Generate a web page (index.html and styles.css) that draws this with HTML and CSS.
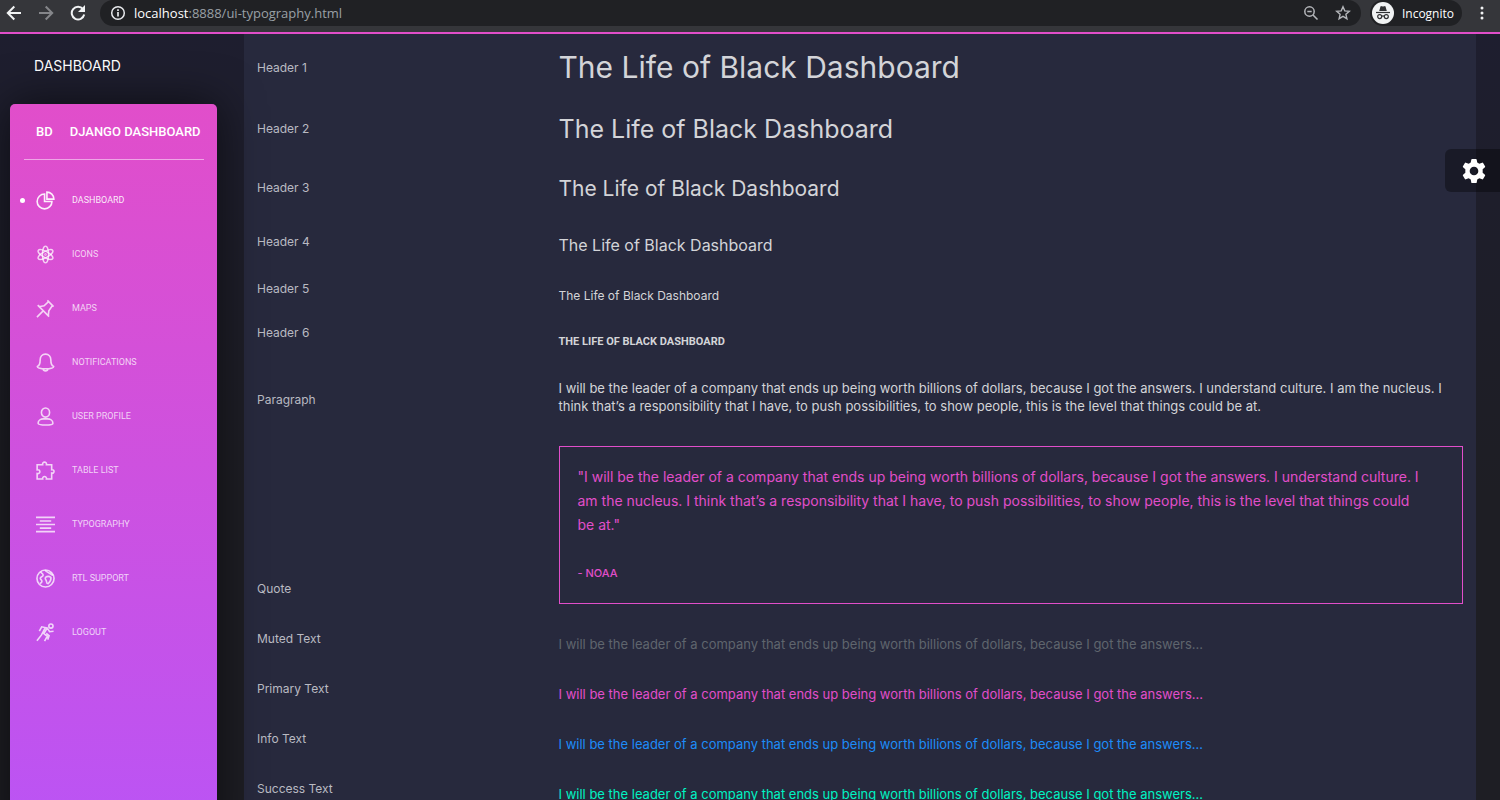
FILE: index.html
```html
<!DOCTYPE html>
<html lang="en">
<head>
<meta charset="utf-8">
<title>Black Dashboard - Typography</title>
<link rel="stylesheet" href="styles.css">
</head>
<body>
<header class="browser">
  <button class="tool" aria-label="Back"><svg width="16" height="16" viewBox="0 0 16 16" fill="none" stroke="#f1f3f4" stroke-width="2"><path d="M15 8H2M8.3 1.5 1.8 8l6.500 6.500"/></svg></button>
  <button class="tool" aria-label="Forward"><svg width="16" height="16" viewBox="0 0 16 16" fill="none" stroke="#85868a" stroke-width="2"><path d="M1 8h13M7.700 1.500 14.200 8l-6.500 6.500"/></svg></button>
  <button class="tool" aria-label="Reload"><svg width="16" height="16" viewBox="0 0 16 16"><path d="M13 4.200A6.300 6.300 0 1 0 14.200 9.500" fill="none" stroke="#f1f3f4" stroke-width="2"/><path d="M15 0v7H8z" fill="#f1f3f4"/></svg></button>
  <div class="omnibox">
    <svg width="16" height="16" viewBox="0 0 16 16" fill="none" stroke="#e8eaed"><circle cx="8" cy="8" r="6.300" stroke-width="1.500"/><path d="M8 7v4.500M8 4.200v1.800" stroke-width="1.700"/></svg>
    <a class="url" href="#"><span class="host">localhost</span>:8888/ui-typography.html</a>
    <button class="tool" aria-label="Zoom"><svg width="16" height="16" viewBox="0 0 16 16" fill="none" stroke="#b4b6ba" stroke-width="1.500"><circle cx="6.500" cy="6.500" r="4.700"/><path d="M4.300 6.500h4.400M10 10l4.500 4.500"/></svg></button>
    <button class="tool" aria-label="Bookmark"><svg width="16" height="16" viewBox="0 0 16 16" fill="none" stroke="#b4b6ba" stroke-width="1.400"><path d="m8 1.800 1.800 4.100 4.500.4-3.400 3 1 4.400L8 11.400l-3.900 2.300 1-4.400-3.400-3 4.500-.4z"/></svg></button>
  </div>
  <button class="profile">
    <svg width="22" height="22" viewBox="0 0 22 22"><circle cx="11" cy="11" r="11" fill="#f1f3f4"/><path d="M7.200 9 8.400 4.700q.3-.8 1.100-.5l1.500.4 1.500-.4q.8-.3 1.100.5L14.800 9z" fill="#303134"/><path d="M4 10.500h14" stroke="#303134" stroke-width="1.200"/><g fill="none" stroke="#303134" stroke-width="1.200"><circle cx="7.700" cy="14.600" r="2"/><circle cx="14.300" cy="14.600" r="2"/><path d="M9.700 14.300q1.300-.7 2.600 0"/></g></svg>
    Incognito
  </button>
  <button class="tool" aria-label="Menu"><svg width="16" height="16" viewBox="0 0 16 16" fill="#f1f3f4"><circle cx="8" cy="3" r="1.500"/><circle cx="8" cy="8" r="1.500"/><circle cx="8" cy="13" r="1.500"/></svg></button>
</header>

<div class="page">
  <aside class="side">
    <a class="page-title" href="#">DASHBOARD</a>
    <nav class="sidebar">
      <div class="brand"><a href="#">BD</a><a href="#">DJANGO DASHBOARD</a></div>
      <ul class="menu">
        <li><a class="active" href="#"><svg viewBox="0 0 20 20"><path d="M9 3.200A7.800 7.800 0 1 0 16.800 11H9z"/><path d="M11.500 1.200v7.300h7.300a7.300 7.300 0 0 0-7.300-7.300z"/></svg>DASHBOARD</a></li>
        <li><a href="#"><svg viewBox="0 0 20 20"><g stroke-width="1.400"><ellipse cx="10" cy="10" rx="3.200" ry="8.800"/><ellipse cx="10" cy="10" rx="3.200" ry="8.800" transform="rotate(60 10 10)"/><ellipse cx="10" cy="10" rx="3.200" ry="8.800" transform="rotate(120 10 10)"/></g><circle cx="10" cy="10" r=".4"/></svg>ICONS</a></li>
        <li><a href="#"><svg viewBox="0 0 20 20"><path d="M12 1.500 18.500 8M13.200 2.700 8.500 7.200 3 8.200M17.300 6.800l-3.800 5.700-.5 4.500M1.800 6.500l12 12M7.800 12.300 1 19"/></svg>MAPS</a></li>
        <li><a href="#"><svg viewBox="0 0 20 20"><path d="M10 1.200c-3.500 0-5.600 2.500-5.600 5.800 0 5-.9 6.300-3 7.200 0 1.500 3.300 2.400 8.600 2.400s8.600-.9 8.600-2.400c-2.100-.9-3-2.200-3-7.200 0-3.300-2.100-5.800-5.600-5.800zM7.500 17c.3 2.500 4.700 2.500 5 0"/></svg>NOTIFICATIONS</a></li>
        <li><a href="#"><svg viewBox="0 0 20 20"><ellipse cx="10" cy="5.800" rx="4.300" ry="4.800"/><path d="M2.200 17c0-3.300 3.300-4.500 5.600-4.500h4.400c2.300 0 5.600 1.200 5.600 4.500 0 1.300-3.500 2-7.800 2s-7.800-.7-7.800-2z"/></svg>USER PROFILE</a></li>
        <li><a href="#"><svg viewBox="0 0 20 20"><path d="M1.200 4H7c-.8-3.800 4.800-3.800 4 0h5.500v5.300c3.300-.8 3.300 4.200 0 3.400V19H11c.8-3.500-4.800-3.500-4 0H1.200v-5.800c3.800.8 3.800-4.700 0-3.900z"/></svg>TABLE LIST</a></li>
        <li><a href="#"><svg viewBox="0 0 20 20"><path d="M0 2.500h20M4 6.300h12M0 10h20M4 13.800h12M0 17.500h20"/></svg>TYPOGRAPHY</a></li>
        <li><a href="#"><svg viewBox="0 0 20 20"><circle cx="10" cy="10" r="9"/><path d="M5 2.700c.3 2.200 2.800 1.800 2.500 4-.2 1.500-3 1.300-3 3 0 1.500 2 1.500 1.700 3.600-.2 1.200-1.200 1.500-2 2M10 1.200c-.3 2.500 4 1.500 4.500 4.300M10 8.800c2-1.500 4.300-1 5.700 0 .5 2.700-.6 4.500-2.900 6.700-2.500-.3-1.200-2-2-3.300-.6-1-1.600-1.600-.8-3.400zM18 6.500c-2-.5-3-1.700-2.700-3"/></svg>RTL SUPPORT</a></li>
        <li><a href="#"><svg viewBox="0 0 20 20"><circle cx="15.700" cy="3.200" r="2.200"/><path d="M3.500 8.500 6 4l5.800 1.200-3.500 6 3.500 3L9 19M11.800 5.200l2.500 4 4.200-.5M9.500 5.500 5.800 12.500 1 18.700M10.800 11l3 2.500-1.500 4"/></svg>LOGOUT</a></li>
      </ul>
    </nav>
  </aside>

  <main class="card">
    <section class="row"><span class="label">Header 1</span><h1>The Life of Black Dashboard</h1></section>
    <section class="row"><span class="label">Header 2</span><h2>The Life of Black Dashboard</h2></section>
    <section class="row"><span class="label">Header 3</span><h3>The Life of Black Dashboard</h3></section>
    <section class="row"><span class="label">Header 4</span><h4>The Life of Black Dashboard</h4></section>
    <section class="row"><span class="label">Header 5</span><h5>The Life of Black Dashboard</h5></section>
    <section class="row"><span class="label">Header 6</span><h6>THE LIFE OF BLACK DASHBOARD</h6></section>
    <section class="row"><span class="label">Paragraph</span><p class="para">I will be the leader of a company that ends up being worth billions of dollars, because I got the answers. I understand culture. I am the nucleus. I think that’s a responsibility that I have, to push possibilities, to show people, this is the level that things could be at.</p></section>
    <section class="row"><span class="label">Quote</span>
      <blockquote><p>"I will be the leader of a company that ends up being worth billions of dollars, because I got the answers. I understand culture. I am the nucleus. I think that’s a responsibility that I have, to push possibilities, to show people, this is the level that things could be at."</p><cite>- NOAA</cite></blockquote></section>
    <section class="row"><span class="label">Muted Text</span><p class="tone muted">I will be the leader of a company that ends up being worth billions of dollars, because I got the answers...</p></section>
    <section class="row"><span class="label">Primary Text</span><p class="tone primary">I will be the leader of a company that ends up being worth billions of dollars, because I got the answers...</p></section>
    <section class="row"><span class="label">Info Text</span><p class="tone info">I will be the leader of a company that ends up being worth billions of dollars, because I got the answers...</p></section>
    <section class="row"><span class="label">Success Text</span><p class="tone success">I will be the leader of a company that ends up being worth billions of dollars, because I got the answers...</p></section>
  </main>
  <button class="settings" aria-label="Settings"><svg width="26" height="26" viewBox="0 0 24 24"><path fill="#fff" fill-rule="evenodd" d="M9.500 1.500Q9.600 1 10.200 1h3.600q.6 0 .7.500l.5 2.700 1.900 1.100 2.600-1q.6-.2.9.3l1.800 3.100q.3.500-.1.900L20 10.400v3.200l2.100 1.800q.4.400.1.900l-1.800 3.100q-.3.500-.9.300l-2.600-1-1.900 1.100-.5 2.700q-.1.500-.7.500h-3.600q-.6 0-.7-.5L9 19.800l-1.900-1.100-2.600 1q-.6.200-.9-.3l-1.800-3.100q-.3-.5.1-.9L4 13.600v-3.200L1.900 8.600q-.4-.4-.1-.9l1.800-3.100q.3-.5.900-.3l2.600 1L9 4.200zM12 8a4 4 0 1 0 0 8 4 4 0 0 0 0-8z"/></svg></button>
</div>
</body>
</html>
```
FILE: styles.css
```css
* { box-sizing: border-box; }
body {
  margin: 0;
  height: 100vh;
  display: flex;
  flex-direction: column;
  overflow: hidden;
  background: #1e1e24;
  color: #d3d4d8;
  font-family: Inter, "Open Sans", sans-serif;
  font-size: 13px;
}
a { color: inherit; text-decoration: none; }
button { border: 0; padding: 0; background: none; color: inherit; font: inherit; display: flex; align-items: center; }
svg { display: block; flex: none; }
h1, h2, h3, h4, h5, h6, p, ul, blockquote { margin: 0; padding: 0; font-weight: 400; }

.browser {
  flex: none;
  display: flex;
  align-items: center;
  height: 34px;
  padding: 0 10px 6px 6px;
  gap: 16px;
  background: #35363a;
  border-bottom: 2px solid #e14eca;
  font-family: "Open Sans", sans-serif;
}
.omnibox {
  flex: 1;
  display: flex;
  align-items: center;
  gap: 16px;
  height: 26px;
  margin-left: -2px;
  padding: 0 10px;
  border-radius: 13px;
  background: #202124;
}
.url { flex: 1; margin-left: -8px; color: #9aa0a6; }
.host { color: #fff; }
.profile {
  gap: 8px;
  height: 26px;
  margin: 0 -4px 0 -7px;
  padding: 0 8px 0 2px;
  border-radius: 13px;
  background: #202124;
  color: #fff;
  font-size: 12px;
}

.page {
  position: relative;
  flex: 1;
  min-height: 0;
  display: flex;
  padding-right: 24px;
  background: linear-gradient(#1e1e2f, #1e1e24 60%);
}
.side {
  flex: none;
  width: 244px;
  display: flex;
  flex-direction: column;
  padding: 0 27px 0 10px;
}
.page-title {
  padding: 22px 24px;
  color: #fff;
  font-size: 14px;
  line-height: 20px;
  margin-bottom: 6px;
}
.sidebar {
  z-index: 1;
  flex: none;
  height: 92vh;
  padding: 0 13px 0 14px;
  border-radius: 5px;
  background: linear-gradient(#e14eca, #ba54f5);
  box-shadow: 0 0 45px rgba(0, 0, 0, 0.6);
  font-family: Roboto, sans-serif;
  font-weight: 500;
}
.brand {
  display: flex;
  gap: 17px;
  height: 56px;
  padding: 0 0 1px 12px;
  align-items: center;
  border-bottom: 1px solid rgba(255, 255, 255, 0.5);
  color: #fff;
  white-space: nowrap;
}
.menu { list-style: none; padding-top: 13px; }
.menu a {
  position: relative;
  display: flex;
  align-items: center;
  gap: 17px;
  height: 54px;
  padding-left: 12px;
  color: rgba(255, 255, 255, 0.75);
  font-size: 9px;
}
.menu svg { width: 19px; height: 19px; fill: none; stroke: currentColor; stroke-width: 1.7; }
.menu .active { color: rgba(255, 255, 255, 0.9); }
.menu .active::before {
  content: "";
  position: absolute;
  left: -4px;
  width: 5px;
  height: 5px;
  border-radius: 50%;
  background: #fff;
}

.card { flex: 1; padding: 0 13px; background: #27293d; }
.row { display: grid; grid-template-columns: 1fr 3fr; align-items: end; padding-top: 31px; }
.row:first-child { padding-top: 17px; }
.label { padding-bottom: 5px; margin-top: -20px; color: #b9bac2; font-size: 12px; line-height: 20px; }
h1 { font-size: 30px; line-height: 32px; }
h2 { font-size: 25px; line-height: 30px; }
h3 { font-size: 21px; line-height: 28px; }
h4 { font-size: 16px; line-height: 23px; }
h5 { font-size: 12px; line-height: 16px; }
h6 { font-family: Roboto, sans-serif; font-size: 11px; line-height: 13px; font-weight: 700; }
.para { line-height: 18px; }
.tone { line-height: 19px; }
blockquote {
  padding: 18px 37px 20px 18px;
  border: 1px solid #e14eca;
  color: #e14eca;
  font-size: 14px;
  line-height: 24px;
}
blockquote p { margin-bottom: 27px; }
cite { display: block; font: 500 11px/19px Inter, sans-serif; }
.muted { color: #5f656d; }
.primary { color: #e14eca; }
.info { color: #1d8cf8; }
.success { color: #00f2c3; }

.settings {
  position: absolute;
  right: 0;
  top: 115px;
  width: 55px;
  height: 43px;
  padding-left: 16px;
  border-radius: 6px 0 0 6px;
  background: rgba(0, 0, 0, 0.35);
}
```
